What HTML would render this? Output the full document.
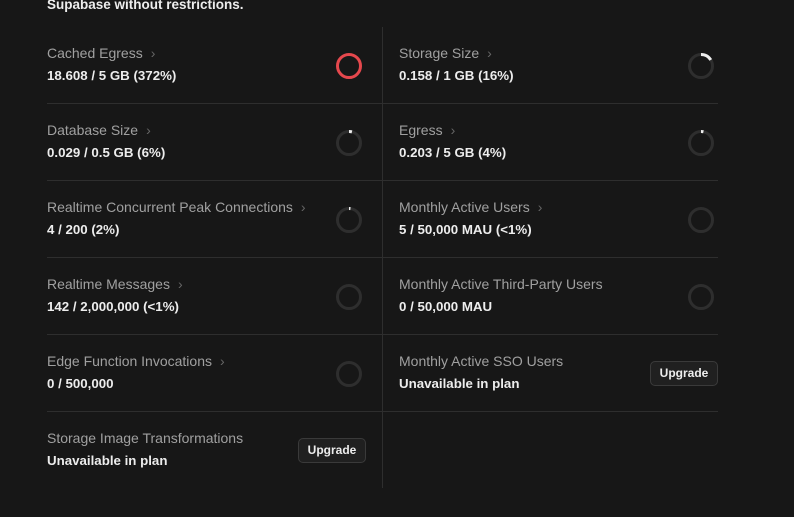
<!DOCTYPE html>
<html><head><style>
body{margin:0;width:794px;height:517px;background:#171717;font-family:"Liberation Sans",sans-serif;position:relative;overflow:hidden;color:#ededed}
.hdr{position:absolute;left:47px;top:-3px;font-size:13.5px;font-weight:bold;color:#ededed}
.vl{position:absolute;left:382px;top:27px;width:1px;height:461px;background:#2e2e2e}
.hl{position:absolute;height:1px;background:#2e2e2e}
.cell{position:absolute;width:320px;height:77px}
.lab{position:absolute;left:0;top:18px;font-size:14px;color:#a0a0a0;white-space:nowrap}
.lab span{color:#666;margin-left:8px}
.val{position:absolute;left:0;top:41px;font-size:13.3px;color:#ededed;font-weight:bold;white-space:nowrap}
svg{position:absolute;left:288px;top:25px}
.btn{position:absolute;left:251px;top:26px;width:66px;height:23px;border:1px solid #3a3a3a;border-radius:5px;background:#202020;font-size:12px;font-weight:bold;color:#ededed;text-align:center;line-height:23px}
</style></head><body>
<div class="hdr">Supabase without restrictions.</div>
<div class="vl"></div>
<div class="hl" style="left:47px;top:103px;width:671px"></div>
<div class="hl" style="left:47px;top:180px;width:671px"></div>
<div class="hl" style="left:47px;top:257px;width:671px"></div>
<div class="hl" style="left:47px;top:334px;width:671px"></div>
<div class="hl" style="left:47px;top:411px;width:671px"></div>

<div class="cell" style="left:47px;top:27px"><div class="lab">Cached Egress<span>›</span></div><div class="val">18.608 / 5 GB (372%)</div>
<svg width="28" height="28"><circle cx="14" cy="14" r="11.5" fill="none" stroke="#e5484d" stroke-width="3"/></svg></div>
<div class="cell" style="left:399px;top:27px"><div class="lab">Storage Size<span>›</span></div><div class="val">0.158 / 1 GB (16%)</div>
<svg width="28" height="28"><circle cx="14" cy="14" r="11.5" fill="none" stroke="#2e2e2e" stroke-width="3"/><circle cx="14" cy="14" r="11.5" fill="none" stroke="#ededed" stroke-width="3" stroke-dasharray="11.6 100" transform="rotate(-90 14 14)"/></svg></div>

<div class="cell" style="left:47px;top:104px"><div class="lab">Database Size<span>›</span></div><div class="val">0.029 / 0.5 GB (6%)</div>
<svg width="28" height="28"><circle cx="14" cy="14" r="11.5" fill="none" stroke="#2e2e2e" stroke-width="3"/><circle cx="14" cy="14" r="11.5" fill="none" stroke="#ededed" stroke-width="3" stroke-dasharray="3 100" transform="rotate(-90 14 14)"/></svg></div>
<div class="cell" style="left:399px;top:104px"><div class="lab">Egress<span>›</span></div><div class="val">0.203 / 5 GB (4%)</div>
<svg width="28" height="28"><circle cx="14" cy="14" r="11.5" fill="none" stroke="#2e2e2e" stroke-width="3"/><circle cx="14" cy="14" r="11.5" fill="none" stroke="#ededed" stroke-width="3" stroke-dasharray="2.5 100" transform="rotate(-90 14 14)"/></svg></div>

<div class="cell" style="left:47px;top:181px"><div class="lab">Realtime Concurrent Peak Connections<span>›</span></div><div class="val">4 / 200 (2%)</div>
<svg width="28" height="28"><circle cx="14" cy="14" r="11.5" fill="none" stroke="#2e2e2e" stroke-width="3"/><circle cx="14" cy="14" r="11.5" fill="none" stroke="#ededed" stroke-width="3" stroke-dasharray="1.5 100" transform="rotate(-90 14 14)"/></svg></div>
<div class="cell" style="left:399px;top:181px"><div class="lab">Monthly Active Users<span>›</span></div><div class="val">5 / 50,000 MAU (&lt;1%)</div>
<svg width="28" height="28"><circle cx="14" cy="14" r="11.5" fill="none" stroke="#2e2e2e" stroke-width="3"/></svg></div>

<div class="cell" style="left:47px;top:258px"><div class="lab">Realtime Messages<span>›</span></div><div class="val">142 / 2,000,000 (&lt;1%)</div>
<svg width="28" height="28"><circle cx="14" cy="14" r="11.5" fill="none" stroke="#2e2e2e" stroke-width="3"/></svg></div>
<div class="cell" style="left:399px;top:258px"><div class="lab">Monthly Active Third-Party Users</div><div class="val">0 / 50,000 MAU</div>
<svg width="28" height="28"><circle cx="14" cy="14" r="11.5" fill="none" stroke="#2e2e2e" stroke-width="3"/></svg></div>

<div class="cell" style="left:47px;top:335px"><div class="lab">Edge Function Invocations<span>›</span></div><div class="val">0 / 500,000</div>
<svg width="28" height="28"><circle cx="14" cy="14" r="11.5" fill="none" stroke="#2e2e2e" stroke-width="3"/></svg></div>
<div class="cell" style="left:399px;top:335px"><div class="lab">Monthly Active SSO Users</div><div class="val">Unavailable in plan</div><div class="btn">Upgrade</div></div>

<div class="cell" style="left:47px;top:412px"><div class="lab">Storage Image Transformations</div><div class="val">Unavailable in plan</div><div class="btn">Upgrade</div></div>
</body></html>
